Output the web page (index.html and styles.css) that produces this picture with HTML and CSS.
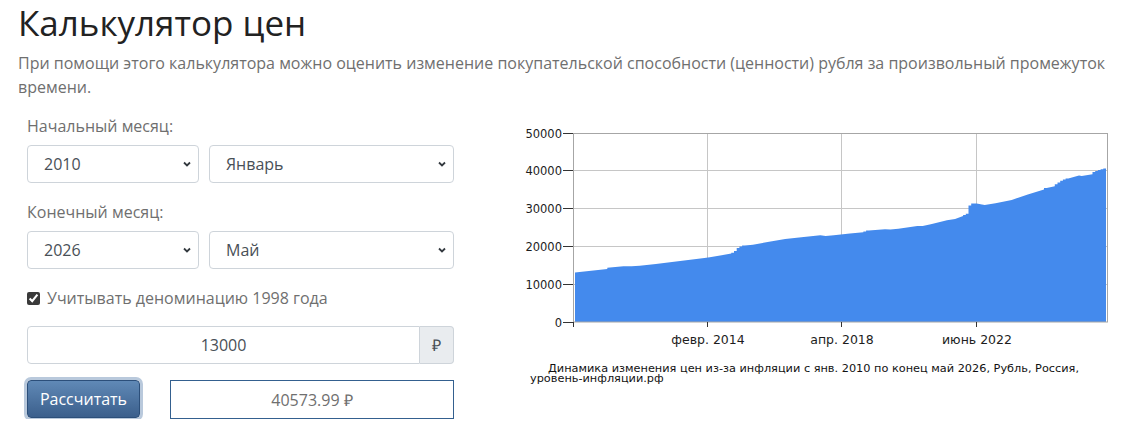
FILE: index.html
```html
<!DOCTYPE html>
<html lang="ru">
<head>
<meta charset="UTF-8">
<title>Калькулятор цен</title>
<link rel="stylesheet" href="styles.css">
</head>
<body>
<div class="page">
  <h1 class="title">Калькулятор цен</h1>
  <p class="lead">При помощи этого калькулятора можно оценить изменение покупательской способности (ценности) рубля за произвольный промежуток времени.</p>

  <div class="calc">
    <form class="calc-form">
      <label class="field-label">Начальный месяц:</label>
      <div class="pair">
        <select class="select"><option>2010</option></select>
        <select class="select"><option>Январь</option></select>
      </div>

      <label class="field-label">Конечный месяц:</label>
      <div class="pair">
        <select class="select"><option>2026</option></select>
        <select class="select"><option>Май</option></select>
      </div>

      <label class="check"><input type="checkbox" checked>Учитывать деноминацию 1998 года</label>

      <div class="input-group">
        <input class="amount" type="text" value="13000">
        <span class="addon">₽</span>
      </div>

      <div class="actions">
        <button class="btn" type="button">Рассчитать</button>
        <output class="result">40573.99 ₽</output>
      </div>
    </form>

    <figure class="chart">
      <svg width="600" height="246" viewBox="0 0 600 246">
        <g class="grid">
          <line x1="53" x2="588" y1="55.5" y2="55.5"/>
          <line x1="53" x2="588" y1="93.5" y2="93.5"/>
          <line x1="53" x2="588" y1="131.5" y2="131.5"/>
          <line x1="53" x2="588" y1="169.5" y2="169.5"/>
          <line x1="187.5" x2="187.5" y1="18" y2="207"/>
          <line x1="321.5" x2="321.5" y1="18" y2="207"/>
          <line x1="456.5" x2="456.5" y1="18" y2="207"/>
        </g>
        <!-- monthly index, jan 2010 .. may 2026, 50000 = y18 -->
        <path class="area" d="M55,207 V157.4 L87.3,153.9 V152.7 L103.5,151.3 L111.6,151.2 L119.7,150.7 L135.9,148.9 L152,147 L184.4,143.1 L189.8,142.3 L211.3,138.6 V137.7 H214 V135.9 H216.7 V133.1 H219.4 V131.5 H222.1 V130.6 H224.8 L232.9,129.8 L249.1,126.7 L265.2,124 L281.4,122.3 L300.3,120.3 L305.7,120.9 L313.8,120.2 L329.9,118.4 L343.4,117.3 V116.5 H346.1 V115.6 H348.8 L365,114.3 L370.4,114.6 L378.4,113.7 L397.3,111 L402.7,111.1 L410.8,109.2 L427,105.3 L435.1,104 L443.1,101 V99.9 H445.8 V98.7 H448.5 V90.4 H451.2 V88.6 H453.9 V88.4 H456.6 L464.7,89.9 L475.5,88.3 L491.7,85 L507.8,79.5 L524,74.6 V73.1 H526.7 L534.8,71.2 V69.2 H537.5 V67.4 H540.2 V65.7 H542.9 V64.5 H545.6 V63.6 H548.3 L559,60.6 L561.7,61 L572.5,59.3 V56.9 H575.2 V55.9 H577.9 V55 H580.6 V54.2 H583.3 V53.6 H586 V207 Z"/>
        <rect class="frame" x="53.5" y="18.5" width="534" height="188.5"/>
        <g class="ticks">
          <line x1="43" x2="53" y1="18.5" y2="18.5"/>
          <line x1="43" x2="53" y1="55.5" y2="55.5"/>
          <line x1="43" x2="53" y1="93.5" y2="93.5"/>
          <line x1="43" x2="53" y1="131.5" y2="131.5"/>
          <line x1="43" x2="53" y1="169.5" y2="169.5"/>
          <line x1="43" x2="53" y1="207.5" y2="207.5"/>
          <line x1="53.5" x2="53.5" y1="207" y2="212"/>
          <line x1="187.5" x2="187.5" y1="207" y2="212"/>
          <line x1="321.5" x2="321.5" y1="207" y2="212"/>
          <line x1="456.5" x2="456.5" y1="207" y2="212"/>
        </g>
        <g class="y-labels">
          <text x="42" y="22.5">50000</text>
          <text x="42" y="59.5">40000</text>
          <text x="42" y="97.5">30000</text>
          <text x="42" y="135.5">20000</text>
          <text x="42" y="173.5">10000</text>
          <text x="42" y="211.5">0</text>
        </g>
        <g class="x-labels">
          <text x="188" y="229">февр. 2014</text>
          <text x="322" y="229">апр. 2018</text>
          <text x="457" y="229">июнь 2022</text>
        </g>
      </svg>
      <figcaption>Динамика изменения цен из-за инфляции с янв. 2010 по конец май 2026, Рубль, Россия, уровень-инфляции.рф</figcaption>
    </figure>
  </div>
</div>
</body>
</html>
```

FILE: styles.css
```css
body {
    margin: 0;
    font-family: "Open Sans", "Liberation Sans", sans-serif;
    color: #212529;
    background: #fff;
}
.page {
    padding: 2px 0 0 18px;
}
.title {
    font-size: 35px;
    font-weight: 400;
    line-height: 42px;
    margin: 0;
    color: #222;
}
.lead {
    font-size: 16px;
    line-height: 24px;
    color: #6f6f6f;
    margin: 7px 0 0;
}

.calc {
    display: grid;
    grid-template-columns: 427px 1fr;
    column-gap: 66px;
    padding: 15px 0 0 9px;
}
.calc-form {
    display: flex;
    flex-direction: column;
}
.field-label {
    font-size: 16px;
    line-height: 24px;
    color: #6f6f6f;
    margin-bottom: 7px;
}
.pair {
    display: grid;
    grid-template-columns: 172px 1fr;
    column-gap: 10px;
    margin-bottom: 17px;
}
.select {
    appearance: none;
    height: 38px;
    border: 1px solid #ced4da;
    border-radius: 4px;
    padding: 0 24px 0 16px;
    font: 16px "Open Sans", sans-serif;
    color: #495057;
    background: #fff url("data:image/svg+xml,%3Csvg xmlns='http://www.w3.org/2000/svg' width='8' height='6' viewBox='0 0 8 6'%3E%3Cpath d='M1 1.5l3 3 3-3' fill='none' stroke='%23343a40' stroke-width='1.8'/%3E%3C/svg%3E") no-repeat right 7px center;
}

.check {
    display: flex;
    align-items: center;
    font-size: 16px;
    line-height: 24px;
    color: #6f6f6f;
    margin-bottom: 16px;
}
.check input {
    width: 13px;
    height: 13px;
    margin: 0 7px 0 0;
    accent-color: #3a3a3a;
}

.input-group {
    display: flex;
    height: 38px;
    margin-bottom: 16px;
}
.amount {
    flex: 1;
    min-width: 0;
    border: 1px solid #ced4da;
    border-radius: 4px 0 0 4px;
    font: 16px "Open Sans", sans-serif;
    color: #495057;
    text-align: center;
    padding: 0 12px;
}
.addon {
    width: 33px;
    display: flex;
    align-items: center;
    justify-content: center;
    border: 1px solid #ced4da;
    border-left: 0;
    border-radius: 0 4px 4px 0;
    background: #e9ecef;
    color: #495057;
    font-size: 16px;
}

.actions {
    display: flex;
    gap: 30px;
}
.btn {
    width: 113px;
    height: 38px;
    border: 1px solid #2c4f7a;
    border-radius: 4px;
    background: linear-gradient(#6089b6, #3b5f8c);
    color: #fff;
    font: 16px "Open Sans", sans-serif;
    box-shadow: 0 0 0 3px #b9c9dc;
    padding: 0;
}
.result {
    flex: 1;
    height: 37px;
    display: flex;
    align-items: center;
    justify-content: center;
    border: 1px solid #34608f;
    color: #6f6f6f;
    font-size: 16px;
}

/* chart */
.chart {
    margin: 1px 0 0;
    font-family: "DejaVu Sans", sans-serif;
}
.chart svg {
    display: block;
}
.grid line {
    stroke: #c6c6c6;
    stroke-width: 1;
}
.area {
    fill: #448aed;
}
.frame {
    fill: none;
    stroke: #a6a6a6;
}
.ticks line {
    stroke: #333;
    stroke-width: 1;
}
.y-labels text {
    font-size: 11.5px;
    fill: #1d1d1d;
    text-anchor: end;
}
.x-labels text {
    font-size: 12.5px;
    fill: #1d1d1d;
    text-anchor: middle;
}
.chart figcaption {
    width: 560px;
    margin: 3px 0 0 10px;
    font-size: 11.3px;
    line-height: 10px;
    text-indent: 18px;
    color: #111;
}
```
